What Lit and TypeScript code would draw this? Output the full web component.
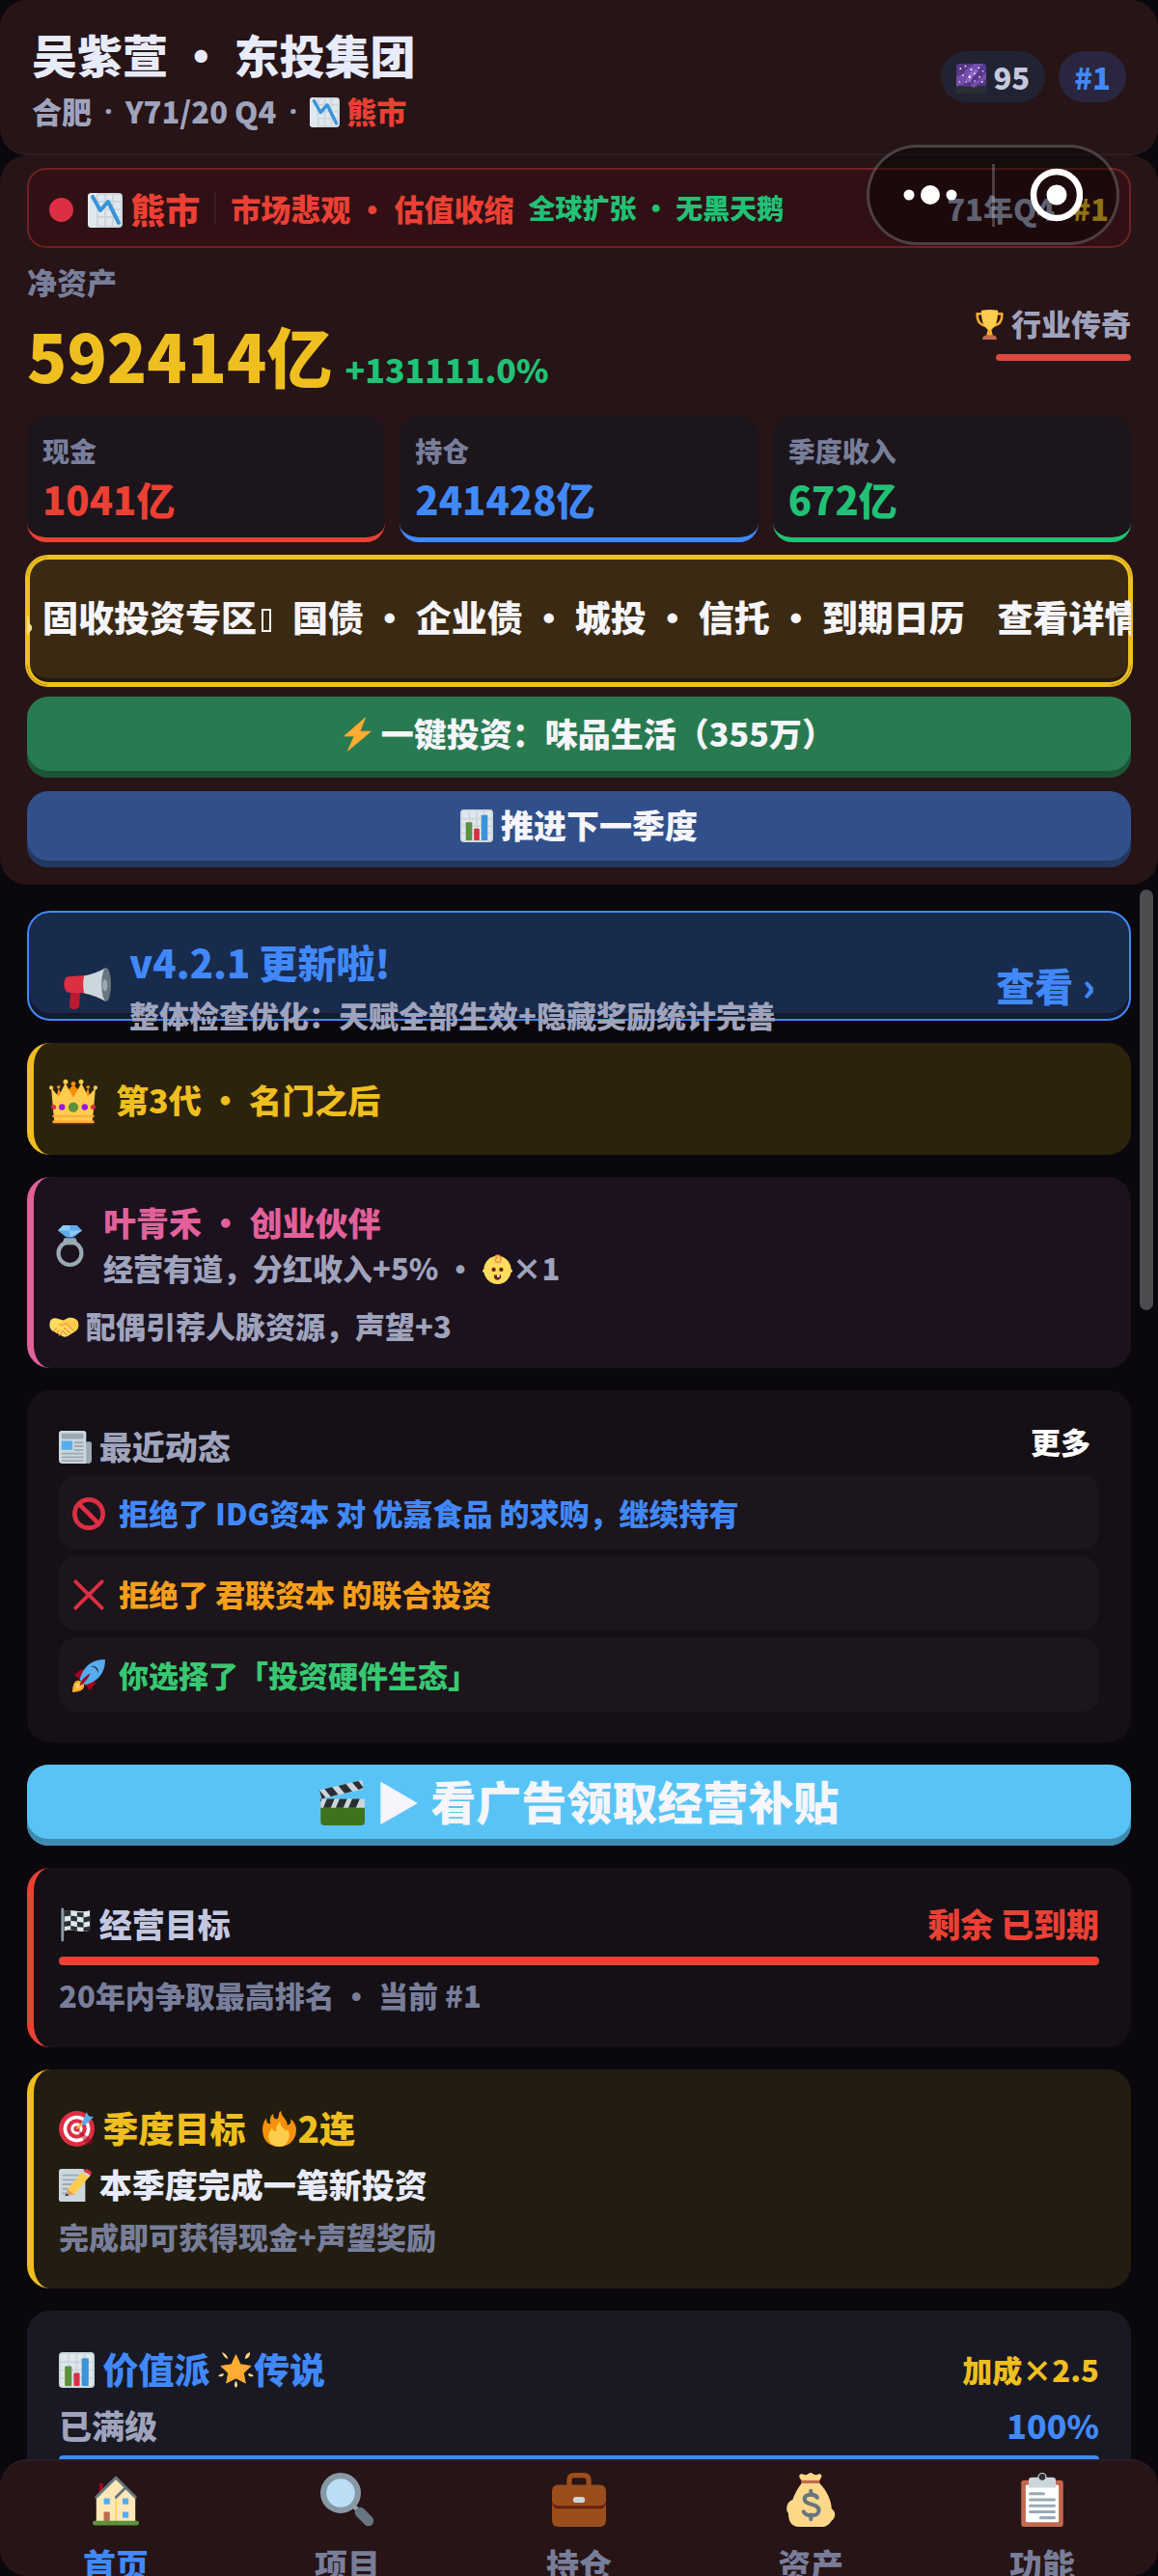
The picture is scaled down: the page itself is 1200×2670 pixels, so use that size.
import { LitElement, html, css, svg, nothing } from "lit";
import { customElement, property } from "lit/decorators.js";

/* Colour glyphs, all on a 36 x 36 grid. */
const glyphs: Record<string, unknown> = {
  galaxy: svg`
    <rect width="36" height="36" rx="4" fill="#553986"/>
    <path d="M0 27V16L8 12 14 5 22 0H32L26 8 18 14 14 21 4 28Z" fill="#744eaa"/>
    <path d="M12 20l4-9 8-5 2 4-6 6-3 7Z" fill="#9266cc"/>
    <path d="M36 10v9l-9 5-7 5h-6l9-8 6-3Z" fill="#744eaa"/>
    <g fill="#fff"><circle cx="5" cy="6" r="1"/><circle cx="11" cy="3" r="1"/><circle cx="18" cy="7" r="1.2"/><circle cx="27" cy="5" r="1"/><circle cx="32" cy="9" r=".9"/><circle cx="22" cy="12" r="1"/><circle cx="8" cy="14" r="1"/><circle cx="16" cy="16" r="1.5"/><circle cx="28" cy="16" r="1"/><circle cx="12" cy="22" r=".9"/><circle cx="22" cy="21" r=".9"/><circle cx="31" cy="22" r="1"/><circle cx="4" cy="22" r=".8"/></g>
    <path d="M0 28l5-2 5 2 6-1 6 2 6-3 4 1 4-1v6a4 4 0 0 1-4 4H4a4 4 0 0 1-4-4Z" fill="#292f33"/>`,
  down: svg`
    <rect width="36" height="36" rx="4" fill="#ccd6dd"/>
    <g fill="#e1e8ed"><path d="M4 0H9V36H4A4 4 0 0 1 0 32V4A4 4 0 0 1 4 0Z"/><path d="M11 2h6v6h-6zm8 0h6v6h-6zm8 0h7v6h-7zM11 10h6v6h-6zm8 0h6v6h-6zm8 0h7v6h-7zM11 18h6v6h-6zm8 0h6v6h-6zm8 0h7v6h-7zM11 26h6v8h-6zm8 0h6v8h-6zm8 0h7v8h-7z"/></g>
    <path d="M5 4L13 18 21 9 32 31" fill="none" stroke="#3b94d9" stroke-width="4" stroke-linecap="round" stroke-linejoin="round"/>`,
  chart: svg`
    <rect width="36" height="36" rx="4" fill="#ccd6dd"/>
    <path d="M2 2h7v7H2zm9 0h6v7h-6zm8 0h6v7h-6zm8 0h7v7h-7zM2 11h7v6H2zm9 0h6v6h-6zm8 0h6v6h-6zm8 0h7v6h-7zM2 19h7v6H2zm9 0h6v6h-6zm8 0h6v6h-6zm8 0h7v6h-7zM2 27h7v7H2zm9 0h6v7h-6zm8 0h6v7h-6zm8 0h7v7h-7z" fill="#e1e8ed"/>
    <rect x="6" y="14" width="7" height="20" rx="1" fill="#5c913b"/>
    <rect x="15" y="21" width="6" height="13" rx="1" fill="#dd2e44"/>
    <rect x="23" y="6" width="7" height="28" rx="1" fill="#3b94d9"/>`,
  dot: svg`<circle cx="18" cy="18" r="18" fill="#dd2e44"/>`,
  trophy: svg`
    <path d="M4 5h7M32 5h-7M3 5c0 8 3 13 9 14M33 5c0 8-3 13-9 14" fill="none" stroke="#ffac33" stroke-width="3" stroke-linecap="round"/>
    <path d="M8 1Q18-1 28 1C28 14 25 21 20 24V30H16V24C11 21 8 14 8 1Z" fill="#ffcc4d"/>
    <path d="M16 24h4l2 7h-8Z" fill="#ffac33"/>
    <path d="M11 31h14l2 5H9Z" fill="#c1694f"/>`,
  bag: svg`
    <path d="M12 5C9 2 11 0 13 1Q15 2 16 1 18-1 20 1 22 2 23 1C26 0 26 3 23.500 5.500L24 7C29 12 32 19 32 24 35 26 35 30 32 32 30 35 28 36 26 36H10C6 36 3 33 3.200 27 1 25 2 19 6 18Q8 12 12 7Z" fill="#fdd888"/>
    <path d="M11.800 5h12.200v2H11.800z" fill="#c1694f"/>
    <path d="M22.500 16.500C21 14 14 13.500 14 17.500 14 22 23.500 20 23.500 25 23.500 29.500 15 29.500 13.300 26M18.200 12v2M18.200 28v3" fill="none" stroke="#67757f" stroke-width="2.600" stroke-linecap="round"/>`,
  bolt: svg`<path d="M27 0L4 20h11L8 36 33 15H21Z" fill="#ffac33" stroke="#ffac33" stroke-linejoin="round"/>`,
  horn: svg`
    <path d="M6 19h7l-.5 12c0 2-2 3-4 3s-3.500-1-3.500-3Z" fill="#be1931"/>
    <path d="M18 8.500L4 9.500C0 10 0 20 4 21.500L18 22Z" fill="#dd2e44"/>
    <path d="M16 9Q25 7 32 3V28Q25 24 16 22C15 18 15 13 16 9Z" fill="#ccd6dd"/>
    <ellipse cx="32.500" cy="15.500" rx="3.500" ry="12.500" fill="#67757f"/>
    <ellipse cx="31.500" cy="16" rx="1.800" ry="4.500" fill="#9aaab4"/>`,
  crown: svg`
    <path d="M5 16L7 8 10 14 18 5 26 14 29 8 31 16Z" fill="#f4900c"/>
    <circle cx="7" cy="7" r="1.300" fill="#f4900c"/><circle cx="29" cy="7" r="1.300" fill="#f4900c"/><circle cx="18" cy="4.500" r="1.700" fill="#f4900c"/>
    <path d="M1.500 7.500L7 14 12 4 18 15 24 4 29 14 34.500 7.500 33 25 32 34H4L3 25Z" fill="#ffcc4d"/>
    <g fill="#ffcc4d"><circle cx="1.500" cy="7.500" r="1.500"/><circle cx="34.500" cy="7.500" r="1.500"/><circle cx="12.200" cy="3" r="1.800"/><circle cx="23.800" cy="3" r="1.800"/></g>
    <path d="M2.500 28h31v1.500h-31zM2.500 32h31v2h-31z" fill="#ffac33"/><path d="M3 34h30v1H3z" fill="#662113"/>
    <circle cx="18" cy="22" r="3.700" fill="#5c913b"/><circle cx="9.500" cy="22" r="2.300" fill="#9617ea"/><circle cx="26.500" cy="22" r="2.300" fill="#9617ea"/><circle cx="3.300" cy="22" r="1.800" fill="#dd2e44"/><circle cx="32.700" cy="22" r="1.800" fill="#dd2e44"/>`,
  ring: svg`
    <path d="M13 11h10l2 6H11Z" fill="#9aaab4"/>
    <circle cx="18" cy="24.300" r="10" fill="none" stroke="#9aaab4" stroke-width="3.500"/>
    <path d="M12 0h12l4.500 4.500L21 10.500h-6L7.500 4.500Z" fill="#5dadec"/>
    <path d="M12 0h6v4.500H7.500Zm6 4.500h10.500L18 10.500Z" fill="#8ccaf7"/>`,
  baby: svg`
    <ellipse cx="18" cy="19" rx="16.500" ry="17" fill="#ffdc5d"/><circle cx="2" cy="20" r="2" fill="#ffdc5d"/><circle cx="34" cy="20" r="2" fill="#ffdc5d"/>
    <path d="M19 10c-4 0-5-5-1-6M16 2c6-3 9 7 3 8" fill="none" stroke="#ef9645" stroke-width="2" stroke-linecap="round"/>
    <circle cx="13.500" cy="18.500" r="2.500" fill="#662113"/><circle cx="22.500" cy="18.500" r="2.500" fill="#662113"/>
    <path d="M14 25h8c1 3-1 6-4 6s-5-3-4-6Z" fill="#662113"/><path d="M17.500 25h3v2.500h-3z" fill="#fff"/>`,
  shake: svg`
    <path d="M1 12C1 8 7 6 11 8L17 10 23 7C29 6 35 9 35 14 36 20 33 22 30 24L22 29Q18 31 14 28L3 22C0 19 0 15 1 12Z" fill="#ffdc5d"/>
    <path d="M14 14Q18 9 23 8C32 6 36 11 35 16 35 20 32 23 29 24Q25 18 20 14 17 18 14 16Z" fill="#ffcc4d"/>
    <path d="M12 14.500C14 17.500 17 16 20 13.500L29 22M18 19l7 6M15 22l6 5M6 22l3-3M9 25l3-3M12 28l3-3" fill="none" stroke="#ef9645" stroke-width="1.500" stroke-linecap="round"/>`,
  paper: svg`
    <path d="M30 12h4q2 0 2 2v18a4 4 0 0 1-8 0Z" fill="#99aab5"/>
    <path d="M3 0h24q3 0 3 3v33H4a4 4 0 0 1-4-4V3Q0 0 3 0Z" fill="#ccd6dd"/>
    <rect x="3" y="3" width="24" height="6" rx="1" fill="#99aab5"/>
    <rect x="3" y="11" width="12" height="10" rx="1" fill="#55acee"/>
    <path d="M17 12h10v2H17zm0 4h10v2H17zm0 4h10v2H17zM3 24h24v2H3zm0 4h24v2H3zm0 4h24v2H3z" fill="#99aab5"/>`,
  ban: svg`<circle cx="18" cy="18" r="15.500" fill="none" stroke="#dd2e44" stroke-width="5"/><path d="M7 7L29 29" stroke="#dd2e44" stroke-width="5"/>`,
  cross: svg`<path d="M3.500 3.500L32.500 32.500M32.500 3.500L3.500 32.500" stroke="#dd2e44" stroke-width="4" stroke-linecap="round"/>`,
  rocket: svg`
    <path d="M2 17l7-6 8 0-8 12ZM19 34l6-7V19L13 27Z" fill="#a0041e"/>
    <path d="M0 36Q0 24 6 23 13 24 13 30 11 36 0 36Z" fill="#ffac33"/><path d="M3 32q0-6 4-6 4 2 2 5-2 2-6 1Z" fill="#ffcc4d"/>
    <path d="M36 0C22 0 12 7 8 22L14 28C29 24 36 14 36 0Z" fill="#55acee"/>
    <path d="M8 29Q9 21 20 15 15 25 8 29Z" fill="#a0041e"/>
    <path d="M20 8c4-3 10 2 8 7-1-5-4-7-8-7Z" fill="#292f33"/>`,
  clapper: svg`
    <path d="M1 20h35v13a3 3 0 0 1-3 3H4a3 3 0 0 1-3-3Z" fill="#3e721d"/>
    <path d="M1 15h35v7H1z" fill="#ccd6dd"/><path d="M3 22l3-7h6l-3 7zm10 0l3-7h6l-3 7zm10 0l3-7h6l-3 7zM1 15h1l-1 3z" fill="#292f33"/>
    <path d="M0 8L34 0 35 7 2 15Z" fill="#ccd6dd"/><path d="M4 7l6-1.500 5 6-6 1.700zM15 4.500l6-1.500 5 6-6 1.600zM26 2l5-1.300 4 5.500-4 1.500zM0 8l5 6-3 1z" fill="#292f33"/>`,
  flag: svg`
    <path d="M4 1v34" stroke="#8899a6" stroke-width="3" stroke-linecap="round"/>
    <path d="M6 3C14 0 22 6 34 2V24C22 28 14 21 6 25Z" fill="#e1e8ed"/>
    <path d="M6 3q4-1.500 7-.5V8L6 9zM20 4q4 1 7 .3V10l-7-1zM13 8l7 1v5.500l-7-1zM27 10l7-1.500V14l-7 1.500zM6 14.500l7-1V19l-7 1zM20 14.500l7 1V21l-7-.5zM13 19l7 1.500V25l-7-1.500zM27 21l7-1.500V24l-7 1.300z" fill="#292f33"/>`,
  target: svg`
    <circle cx="18" cy="18" r="18" fill="#dd2e44"/><circle cx="18" cy="18" r="13.500" fill="#fff"/><circle cx="18" cy="18" r="10" fill="#dd2e44"/><circle cx="18" cy="18" r="6" fill="#fff"/><circle cx="18" cy="18" r="3" fill="#dd2e44"/>
    <path d="M18 18L35 30q-2 4-7 5Z" fill="#a0041e" opacity=".5"/>
    <path d="M18 18L30 6" stroke="#ffac33" stroke-width="2"/><path d="M24 10l4-9 2 4 5 1-7 7-5 2Z" fill="#55acee"/>`,
  fire: svg`
    <path d="M35 19C35 30 27 36 18 36 8 36 1 30 1 19 1 15 2 10 5 7 5 11 6 13 9 13 8 9 9 4 12 3 11 8 16 10 17 6 18 3 17 1 20 0 19 5 26 8 26 14 30 14 30 10 29 8 33 10 35 15 35 19Z" fill="#f4900c"/>
    <path d="M28 24c0 7-4 12-10 12S7 32 7 26c0-4 2-7 4-9 0 3 2 4 4 3-1-4 2-8 4-9-1 5 5 7 5 9 2 0 2-1 2-2 1 2 2 4 2 6Z" fill="#ffcc4d"/>`,
  memo: svg`
    <path d="M3 0h22q4 0 4 4v32H3a3 3 0 0 1-3-3V3a3 3 0 0 1 3-3Z" fill="#ccd6dd"/>
    <path d="M4 6h18v2H4zm0 5h18v2H4zm0 5h16v2H4zm0 5h12v2H4zm0 5h7v2H4z" fill="#99aab5"/>
    <path d="M9 23L26 3 34 8 17 28 8 29Z" fill="#ffcc4d"/><path d="M9 22l8 6-9 2Z" fill="#d99e82"/><path d="M8 27l3 2-4 1Z" fill="#292f33"/>
    <path d="M26 3l8 5 2-3Q35 1 30 0Z" fill="#dd2e44"/><path d="M25 4l8 5 1.500-2-8-5Z" fill="#ccd6dd"/>`,
  star: svg`
    <path d="M18 3l4.500 9.500L33 14l-7.500 7L27.500 31 18 26 8.500 31l2-10L3 14l10.500-1.500Z" fill="#ffac33" stroke="#ffac33" stroke-linejoin="round"/>
    <g fill="#ffd983"><path d="M4 0q5 2 6 7Q5 5 4 0ZM32 0q1 5-5 7 0-5 5-7ZM0 24q3-3 6-2-1 4-6 2ZM36 24q-3-3-6-2 1 4 6 2ZM18 29q3 4 0 7-3-3 0-7Z"/></g>`,
  house: svg`
    <path d="M7 7h2.700v6H7z" fill="#a0041e"/>
    <path d="M5 16L18 3 31 16V33H5Z" fill="#ffe8b6"/>
    <path d="M17.700 16h1v17h-1z" fill="#ffcc4d"/>
    <path d="M5 16.200L18 3.200 31 16.200M18.200 16.200L24.500 10" fill="none" stroke="#66757f" stroke-width="1.900" stroke-linecap="round" stroke-linejoin="round"/>
    <path d="M10 17h4v4h-4zm12.500 0h4v4h-4zm0 9h4v4h-4z" fill="#55acee"/><path d="M10 26h4v7h-4z" fill="#c1694f"/>
    <rect x="2.500" y="32" width="31" height="3" rx="1.500" fill="#5c913b"/>`,
  search: svg`
    <path d="M21 21l4 4" stroke="#9aaab4" stroke-width="3"/>
    <path d="M26.500 26.500L32 32" stroke="#66757f" stroke-width="7" stroke-linecap="round"/>
    <circle cx="13.500" cy="13.500" r="11.500" fill="#bbddf5" stroke="#8899a6" stroke-width="4"/>`,
  briefcase: svg`
    <path d="M11.500 10V5q0-3.300 3.300-3.300h6.400q3.300 0 3.300 3.300v5" fill="none" stroke="#9a4e1c" stroke-width="3.400"/>
    <rect y="8" width="36" height="28" rx="4" fill="#9a4e1c"/>
    <path d="M0 19q1 3 4 3h28q3 0 4-3v1.500q-1 3.500-4 3.500H4q-3 0-4-3.500Z" fill="#662113"/>
    <rect x="14" y="16" width="8" height="4" rx="2" fill="#ccd6dd"/>`,
  clipboard: svg`
    <rect x="4" y="5" width="28" height="31" rx="2" fill="#c1694f"/><rect x="7" y="8" width="22" height="25" rx="1" fill="#fff"/>
    <path d="M11 3h4a3 3 0 0 1 6 0h4q2 0 2 2v5H9V5q0-2 2-2Z" fill="#ccd6dd"/><circle cx="18" cy="2.800" r="2.200" fill="#292f33"/>
    <path d="M10 14h9M10 18h16M10 22h16M10 26h16M17 30h9" stroke="#99aab5" stroke-width="2" stroke-linecap="round"/>`,
};

const emoji = (name: string) =>
  html`<svg class="emoji" viewBox="0 0 36 36" aria-hidden="true">${glyphs[name]}</svg>`;

const emojiStyle = css`
  .emoji { display: inline-block; width: 1em; height: 1em; vertical-align: -0.12em; overflow: visible; flex: none; }
`;

@customElement("progress-line")
export class ProgressLine extends LitElement {
  static styles = css`
    :host { display: block; }
    .track { height: 9px; border-radius: 4px; overflow: hidden; background: rgba(255, 255, 255, 0.08); }
    .fill { height: 100%; border-radius: 4px; background: currentColor; }
  `;
  @property({ type: Number }) value = 100;
  @property() label = "";
  render() {
    return html`<div class="track" role="progressbar" aria-label=${this.label} aria-valuenow=${this.value}>
      <div class="fill" style="width:${this.value}%"></div>
    </div>`;
  }
}

const stats = [
  { label: "现金", value: "1041亿", tone: "red" },
  { label: "持仓", value: "241428亿", tone: "blue" },
  { label: "季度收入", value: "672亿", tone: "green" },
];

const events = [
  { icon: "ban", text: "拒绝了 IDG资本 对 优嘉食品 的求购，继续持有", tone: "blue" },
  { icon: "cross", text: "拒绝了 君联资本 的联合投资", tone: "orange" },
  { icon: "rocket", text: "你选择了「投资硬件生态」", tone: "mint" },
];

const tabs = [
  { icon: "house", text: "首页", active: true },
  { icon: "search", text: "项目", active: false },
  { icon: "briefcase", text: "持仓", active: false },
  { icon: "bag", text: "资产", active: false },
  { icon: "clipboard", text: "功能", active: false },
];

@customElement("app-root")
export class AppRoot extends LitElement {
  static styles = [
    emojiStyle,
    css`
      :host {
        display: block;
        font-family: "Noto Sans CJK SC", "Noto Sans", sans-serif;
        font-weight: 900;
        font-size: 31px;
        line-height: 45px;
        color: #9fa3bc;
      }
      * { box-sizing: border-box; margin: 0; padding: 0; }
      h1, h2 { font-weight: inherit; }
      button { font: inherit; color: inherit; border: 0; background: none; cursor: pointer; }
      a { color: inherit; text-decoration: none; }
      ul { list-style: none; }
      .app { position: relative; display: flex; flex-direction: column; height: 100vh; overflow: hidden; background: #0a080d; }

      .s28 { font-size: 28px; line-height: 41px; }
      .s34 { font-size: 34px; line-height: 49px; }
      .s37 { font-size: 37px; line-height: 54px; }
      .s40 { font-size: 40px; line-height: 59px; }
      .s43 { font-size: 43px; line-height: 62px; }
      .s47 { font-size: 47px; line-height: 68px; }
      .s50 { font-size: 50px; line-height: 72px; }
      .s68 { font-size: 68px; line-height: 107px; }
      .red { color: #eb4034; }
      .blue { color: #4189fa; }
      .green { color: #21c176; }
      .mint { color: #37c871; }
      .gold { color: #efbf1f; }
      .orange { color: #f59e1b; }
      .pink { color: #e2619a; }
      .soft { color: #9fa3bc; }
      .muted { color: #787e9a; }
      .bright { color: #e8ebfa; }
      .pale { color: #c3c8e0; }
      .row { display: flex; align-items: center; }
      .between { justify-content: space-between; }

      .header { display: flex; align-items: center; justify-content: space-between; padding: 22px 33px; background: #271416; border-bottom: 2px solid #2a1d26; border-radius: 28px; }
      .who { display: grid; gap: 2px; }
      .meta { display: flex; gap: 13px; }
      .mid { font-family: "Noto Sans", sans-serif; font-weight: 700; }
      .pills { display: flex; gap: 14px; }
      .pill { padding: 4px 16px; border-radius: 27px; background: #212333; color: #c5c9dd; }
      .pill-rank { background: #2a263f; color: #4189fa; }

      .panel { padding: 13px 28px 18px; background: #271416; border-radius: 28px; }
      .ticker { display: flex; align-items: center; gap: 15px; height: 83px; padding: 0 21px; border: 2px solid #6d2320; border-radius: 20px; background: #301015; white-space: nowrap; }
      .lamp { font-size: 25px; line-height: 36px; }
      .mood { font-size: 36px; line-height: 54px; }
      .rule { width: 2px; height: 33px; background: #3b1c22; }
      .when { display: flex; gap: 18px; margin-left: auto; }
      .hero { display: flex; align-items: center; justify-content: space-between; margin: 12px 0 10px; }
      .worth { display: flex; align-items: baseline; gap: 13px; }
      .rank { display: flex; flex-direction: column; align-items: flex-end; gap: 10px; margin-bottom: 4px; }
      .rank-bar { width: 140px; height: 7px; border-radius: 4px; background: #dc4a3c; }
      .stats { display: grid; grid-template-columns: repeat(3, 1fr); gap: 15px; }
      .stat { padding: 16px 16px 10px; border-bottom: 5px solid currentColor; border-radius: 20px; background: #1c151b; }

      .btn { display: flex; align-items: center; justify-content: center; width: 100%; padding: 0 28px 10px; border-radius: 22px; color: #f5f5fa; white-space: pre; overflow: hidden; }
      .btn-bond { height: 133px; margin-top: 15px; padding-right: 48px; background: #3a2a14; box-shadow: 0 0 0 2px #efbf1f, inset 0 0 0 3px #efbf1f, inset 0 -7px 0 #241a0e; }
      .missing { display: inline-block; width: 10px; height: 24px; margin: 0 5px; border: 2px solid currentColor; }
      .btn-quick { height: 84px; margin-top: 12px; padding-left: 46px; background: #287a50; box-shadow: inset 0 -7px 0 #1c5536; }
      .btn-next { height: 79px; margin-top: 14px; background: #31508b; box-shadow: inset 0 -7px 0 #23385f; }
      .btn-ad { flex: none; height: 84px; background: #58c4f6; box-shadow: inset 0 -7px 0 #3f8aaf; }

      .feed { position: relative; display: flex; flex: 1; flex-direction: column; gap: 23px; min-height: 0; padding: 27px 28px 0; overflow: hidden; }
      .thumb { position: absolute; top: 5px; right: 5px; width: 14px; height: 436px; border-radius: 7px; background: #4d4b4e; }
      .card { flex: none; padding: 33px 33px 32px; border-radius: 24px; background: #141016; }
      .edge { padding-left: 26px; border-left: 7px solid; }
      .edge-red { border-left-color: #eb4034; }
      .edge-gold { border-left-color: #efbf1f; background: #221d10; }
      .slim { padding: 22px 16px; }
      .notice { height: 114px; padding: 22px 35px; border: 2px solid #4189fa; background: #182b4d; box-shadow: inset 0 -6px 0 #131a30; }
      .notice-row { display: flex; align-items: center; gap: 19px; }
      .notice-text { display: grid; flex: 1; gap: 2px; }
      .legacy { gap: 19px; border-left-color: #efbf1f; background: #2c230e; }
      .partner { display: grid; gap: 15px; border-left-color: #e2619a; background: #1c121e; }
      .partner-row { gap: 13px; }
      .more { width: 80px; padding-bottom: 10px; line-height: 39px; color: #fff; }
      .events { display: grid; gap: 7px; margin-top: 6px; }
      .event { display: flex; align-items: center; gap: 14px; padding: 14px; border-radius: 18px; background: #1c151b; }
      .bar { margin: 10px 0 8px; }
      .quarter { display: grid; gap: 7px; }
      .style { display: grid; gap: 7px; background: #191924; }

      .tabs { display: grid; grid-template-columns: repeat(5, 1fr); flex: none; height: 121px; padding-top: 12px; overflow: hidden; border-top: 2px solid #2a1d26; border-radius: 28px; background: #271416; z-index: 1; }
      .tab { display: flex; flex-direction: column; align-items: center; gap: 14px; height: 120px; }
      .tab .emoji { width: 56px; height: 56px; }

      .capsule { position: absolute; top: 150px; right: 40px; display: flex; align-items: center; width: 262px; height: 104px; border: 3px solid rgba(255, 255, 255, 0.22); border-radius: 52px; background: rgba(0, 0, 0, 0.4); z-index: 2; }
      .cap-btn { display: flex; flex: 1; align-items: center; justify-content: center; height: 100%; }
      .cap-rule { width: 3px; height: 65px; background: rgba(255, 255, 255, 0.22); }
      .cap-icon { width: 56px; height: 56px; }
    `,
  ];

  render() {
    return html`<div class="app" lang="zh-CN">
      <header class="header">
        <div class="who">
          <h1 class="s47 bright">吴紫萱 • 东投集团</h1>
          <p class="meta"><span>合肥</span><span class="mid">·</span><span>Y71/20 Q4</span><span class="mid">·</span><span>${emoji("down")} <span class="red">熊市</span></span></p>
        </div>
        <div class="pills">
          <span class="pill">${emoji("galaxy")} 95</span>
          <span class="pill pill-rank">#1</span>
        </div>
      </header>

      <section class="panel">
        <div class="ticker red">
          <span class="lamp">${emoji("dot")}</span>
          <span class="mood">${emoji("down")} 熊市</span>
          <span class="rule"></span>
          <span>市场悲观 • 估值收缩</span>
          <span class="s28 green">全球扩张 • 无黑天鹅</span>
          <span class="when"><span class="soft">71年Q4</span><span class="gold">#1</span></span>
        </div>
        <div class="hero">
          <div>
            <p class="muted">净资产</p>
            <p class="worth"><span class="s68 gold">592414亿</span><span class="s34 green">+131111.0%</span></p>
          </div>
          <div class="rank">
            <span>${emoji("trophy")} 行业传奇</span>
            <span class="rank-bar"></span>
          </div>
        </div>
        <div class="stats">
          ${stats.map((s) => html`<div class="stat ${s.tone}">
            <p class="s28 muted">${s.label}</p>
            <p class="s40">${s.value}</p>
          </div>`)}
        </div>
        <button class="btn btn-bond s37"><span>${emoji("bag")} 固收投资专区<span class="missing"></span>  国债 • 企业债 • 城投 • 信托 • 到期日历    查看详情</span></button>
        <button class="btn btn-quick s34"><span>${emoji("bolt")} 一键投资：味品生活（355万）</span></button>
        <button class="btn btn-next s34"><span>${emoji("chart")} 推进下一季度</span></button>
      </section>

      <main class="feed">
        <a class="card notice" href="#update">
          <span class="notice-row">
            <span class="s50">${emoji("horn")}</span>
            <span class="notice-text">
              <span class="s40 blue">v4.2.1 更新啦!</span>
              <span>整体检查优化：天赋全部生效+隐藏奖励统计完善</span>
            </span>
            <span class="s40 blue">查看 ›</span>
          </span>
        </a>
        <section class="card edge slim legacy row">
          <span class="s50">${emoji("crown")}</span>
          <h2 class="s34 gold">第3代 • 名门之后</h2>
        </section>
        <section class="card edge slim partner">
          <div class="row partner-row">
            <span class="s43">${emoji("ring")}</span>
            <div>
              <h2 class="s34 pink">叶青禾 • 创业伙伴</h2>
              <p>经营有道，分红收入+5% • ${emoji("baby")}×1</p>
            </div>
          </div>
          <p>${emoji("shake")} 配偶引荐人脉资源，声望+3</p>
        </section>
        <section class="card">
          <div class="row between">
            <h2 class="s34">${emoji("paper")} 最近动态</h2>
            <button class="more">更多</button>
          </div>
          <ul class="events">
            ${events.map((e) => html`<li class="event"><span class="s34">${emoji(e.icon)}</span><span class=${e.tone}>${e.text}</span></li>`)}
          </ul>
        </section>
        <button class="btn btn-ad s47"><span>${emoji("clapper")} ▶ 看广告领取经营补贴</span></button>
        <section class="card edge edge-red">
          <div class="row between s34">
            <h2 class="s34 pale">${emoji("flag")} 经营目标</h2>
            <span class="red">剩余 已到期</span>
          </div>
          <progress-line class="bar red" label="经营目标" .value=${100}></progress-line>
          <p class="muted">20年内争取最高排名 • 当前 #1</p>
        </section>
        <section class="card edge edge-gold quarter">
          <h2 class="s37 gold">${emoji("target")} 季度目标&nbsp; ${emoji("fire")}2连</h2>
          <p class="s34 bright">${emoji("memo")} 本季度完成一笔新投资</p>
          <p class="muted">完成即可获得现金+声望奖励</p>
        </section>
        <section class="card style">
          <div class="row between">
            <h2 class="s37 blue">${emoji("chart")} 价值派 ${emoji("star")}传说</h2>
            <span class="gold">加成×2.5</span>
          </div>
          <div class="row between s34"><span>已满级</span><span class="blue">100%</span></div>
          <progress-line class="blue" label="已满级" .value=${100}></progress-line>
        </section>
        <div class="thumb"></div>
      </main>

      <nav class="tabs s34">
        ${tabs.map((t) => html`<a class="tab ${t.active ? "blue" : "muted"}" href="#${t.icon}" aria-current=${t.active ? "page" : nothing}>${emoji(t.icon)}<span>${t.text}</span></a>`)}
      </nav>

      <div class="capsule">
        <button class="cap-btn" aria-label="更多">
          <svg class="cap-icon" viewBox="0 0 56 56" fill="#fff"><circle cx="6" cy="28" r="5.500"/><circle cx="28" cy="28" r="10"/><circle cx="50" cy="28" r="5.500"/></svg>
        </button>
        <span class="cap-rule"></span>
        <button class="cap-btn" aria-label="关闭">
          <svg class="cap-icon" viewBox="0 0 56 56"><circle cx="29" cy="28" r="24" fill="none" stroke="#fff" stroke-width="6.500"/><circle cx="29" cy="28" r="10.500" fill="#fff"/></svg>
        </button>
      </div>
    </div>`;
  }
}
